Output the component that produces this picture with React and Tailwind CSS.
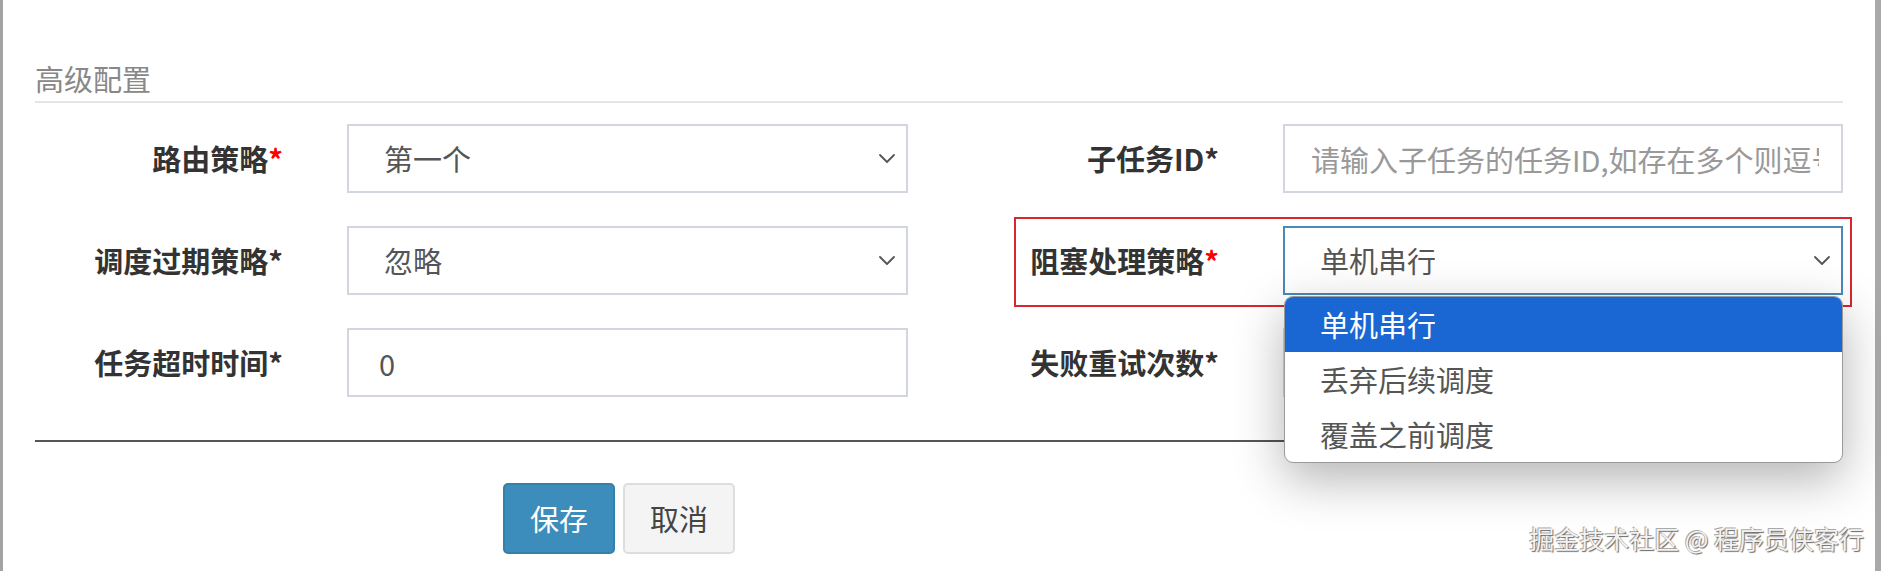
import React from 'react';

// Advanced config section of a job edit form, with the blocking-strategy select opened
const BLOCK_OPTIONS = ['单机串行', '丢弃后续调度', '覆盖之前调度'];

function Chevron() {
    return (
        <svg width="16" height="9" viewBox="0 0 16 9" fill="none" className="shrink-0">
            <path d="M1 1 L8 8 L15 1" stroke="#555" strokeWidth="1.8" strokeLinecap="round" strokeLinejoin="round" />
        </svg>
    );
}

function Label({ text, red }) {
    return (
        <div className="flex items-center justify-end font-bold text-[#333] whitespace-nowrap">
            {text}
            <span className={red ? 'text-[#f00]' : 'text-[#333]'}>*</span>
        </div>
    );
}

function SelectBox({ value, focused }) {
    return (
        <div
            className={`flex h-[69px] items-center justify-between bg-white pl-[35px] pr-[11px] text-[#555] border-2 ${focused ? 'border-[#4a8ab8]' : 'border-[#d2d6de]'}`}
        >
            <span>{value}</span>
            <Chevron />
        </div>
    );
}

function TextBox({ value, placeholder }) {
    return (
        <input
            readOnly
            value={value}
            placeholder={placeholder}
            className={`h-[69px] w-full min-w-0 border-2 border-[#d2d6de] bg-white pr-[22px] text-[#555] outline-none placeholder:text-[#999] ${placeholder ? 'pl-[26px]' : 'pl-[30px]'}`}
        />
    );
}

export default function App() {
    return (
        <div className="flex h-[571px] w-full overflow-hidden bg-white text-[29px] font-['Noto_Sans_CJK_SC','Noto_Sans',sans-serif]">
            <div className="w-[3px] shrink-0 bg-[#a3a3a3]" />

            <div className="relative flex-1 pl-[32px]">
                {/* Section header */}
                <div className="mt-[60px] w-[1808px] border-b-2 border-[#e5e5e5] pb-[5px] leading-[36px] text-[#888]">
                    高级配置
                </div>

                {/* Form rows */}
                <div className="mt-[21px] grid grid-cols-[248px_561px_247px_560px] gap-x-[64px] gap-y-[33px]">
                    <Label text="路由策略" red />
                    <SelectBox value="第一个" />
                    <Label text="子任务ID" />
                    <TextBox value="" placeholder="请输入子任务的任务ID,如存在多个则逗号分隔" />

                    <Label text="调度过期策略" />
                    <SelectBox value="忽略" />
                    <Label text="阻塞处理策略" red />
                    <SelectBox value="单机串行" focused />

                    <Label text="任务超时时间" />
                    <TextBox value="0" />
                    <Label text="失败重试次数" />
                    <TextBox value="-1" />
                </div>

                <div className="mt-[43px] h-[2px] w-[1808px] bg-[#555]" />

                {/* Actions */}
                <div className="mt-[41px] flex gap-2 pl-[468px]">
                    <button className="flex h-[71px] w-[112px] items-center justify-center rounded-[5px] border-2 border-[#367fa9] bg-[#3c8dbc] text-white">
                        保存
                    </button>
                    <button className="flex h-[71px] w-[112px] items-center justify-center rounded-[5px] border-2 border-[#ddd] bg-[#f4f4f4] text-[#444]">
                        取消
                    </button>
                </div>

                {/* Annotation box around the blocking strategy row */}
                <div className="absolute left-[1011px] top-[217px] h-[90px] w-[838px] border-2 border-[#d9262c]" />

                {/* Opened select list */}
                <div className="absolute left-[1281px] top-[296px] w-[559px] overflow-hidden rounded-[9px] border border-[#9a9a9a] bg-white shadow-[0_16px_50px_rgba(0,0,0,0.3)]">
                    {BLOCK_OPTIONS.map((opt, idx) => (
                        <div
                            key={opt}
                            className={`flex h-[55px] items-center pl-[35px] ${idx === 0 ? 'bg-[#1a66d2] text-white' : 'text-[#555]'}`}
                        >
                            {opt}
                        </div>
                    ))}
                </div>

                {/* Watermark */}
                <div className="absolute right-[11px] top-[521px] text-[25px] leading-[34px] text-[#f2f2f2] [text-shadow:1px_1px_1px_#666,-1px_-1px_0_#aaa]">
                    掘金技术社区 @ 程序员侠客行
                </div>
            </div>

            <div className="w-[6px] shrink-0 bg-[#a9a9a9]" />
        </div>
    );
}
